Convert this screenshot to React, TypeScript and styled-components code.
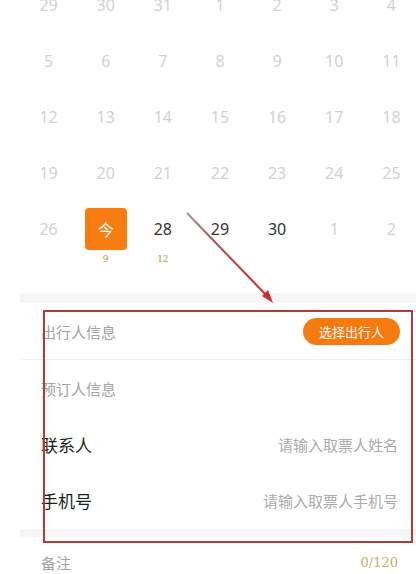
import React from "react";
import styled, { createGlobalStyle } from "styled-components";

const GlobalStyle = createGlobalStyle`
  html, body {
    margin: 0;
    padding: 0;
    background: #ffffff;
    overflow: hidden;
  }
  body {
    font-family: "Noto Sans", "Noto Sans CJK SC", sans-serif;
  }
`;

const Screen = styled.div`
  position: relative;
  width: 416px;
  height: 574px;
  overflow: hidden;
  background: #fff;
`;

const Page = styled.div`
  width: 400px;
  margin-left: 20px;
`;

const Calendar = styled.div`
  display: grid;
  grid-template-columns: repeat(7, 1fr);
  grid-auto-rows: 56px;
  margin-top: -23px;
  padding-bottom: 36px;
`;

const Cell = styled.div`
  position: relative;
  display: flex;
  align-items: center;
  justify-content: center;
`;

const Day = styled.div<{ $state: "off" | "on" | "today" }>`
  width: 42px;
  height: 42px;
  border-radius: 4px;
  display: flex;
  align-items: center;
  justify-content: center;
  font-size: 16px;
  color: ${(p) => (p.$state === "off" ? "#d2d2d2" : p.$state === "on" ? "#333" : "#fff")};
  background: ${(p) => (p.$state === "today" ? "#f77d10" : "transparent")};
`;

const Sub = styled.span`
  position: absolute;
  top: 53px;
  left: 0;
  right: 0;
  text-align: center;
  font-family: "DejaVu Serif", serif;
  font-size: 9px;
  color: #b59c32;
`;

const Band = styled.div<{ $h: number }>`
  height: ${(p) => p.$h}px;
  background: #f6f6f6;
`;

const Row = styled.div<{ $h: number; $line?: boolean }>`
  height: ${(p) => p.$h}px;
  display: flex;
  align-items: center;
  justify-content: space-between;
  padding: 0 20px 0 21px;
  border-bottom: ${(p) => (p.$line ? "1px solid #f0f0f0" : "none")};
`;

const Title = styled.span`
  font-size: 15px;
  color: #a3a3a3;
  font-family: "Noto Sans CJK SC", sans-serif;
`;

const Label = styled.span`
  font-size: 17px;
  color: #1e1e1e;
  font-family: "Noto Sans CJK SC", sans-serif;
`;

const Placeholder = styled.span`
  font-size: 15px;
  color: #ababab;
  font-family: "Noto Sans CJK SC", sans-serif;
  margin-right: 2px;
`;

const PickButton = styled.button`
  width: 97px;
  height: 27px;
  border: none;
  border-radius: 14px;
  background: #f57b0f;
  color: #fff;
  font-size: 13px;
  font-family: "Noto Sans CJK SC", sans-serif;
  padding: 0;
`;

const Counter = styled.span`
  font-family: "DejaVu Serif", serif;
  font-size: 13px;
  color: #c4b25a;
  margin-right: 2px;
`;

const Highlight = styled.div`
  position: absolute;
  left: 43px;
  top: 310px;
  width: 366px;
  height: 229px;
  border: 2px solid #b33b3b;
  pointer-events: none;
`;

const Arrow = styled.svg`
  position: absolute;
  left: 0;
  top: 0;
  pointer-events: none;
`;

type D = [string, "off" | "on" | "today", string?];

const days: D[] = [
  ["29", "off"], ["30", "off"], ["31", "off"], ["1", "off"], ["2", "off"], ["3", "off"], ["4", "off"],
  ["5", "off"], ["6", "off"], ["7", "off"], ["8", "off"], ["9", "off"], ["10", "off"], ["11", "off"],
  ["12", "off"], ["13", "off"], ["14", "off"], ["15", "off"], ["16", "off"], ["17", "off"], ["18", "off"],
  ["19", "off"], ["20", "off"], ["21", "off"], ["22", "off"], ["23", "off"], ["24", "off"], ["25", "off"],
  ["26", "off"], ["今", "today", "9"], ["28", "on", "12"], ["29", "on"], ["30", "on"], ["1", "off"], ["2", "off"],
];

export default function App() {
  return (
    <Screen>
      <GlobalStyle />
      <Page>
        <Calendar>
          {days.map(([n, s, sub], i) => (
            <Cell key={i}>
              <Day $state={s}>{n}</Day>
              {sub && <Sub>{sub}</Sub>}
            </Cell>
          ))}
        </Calendar>
        <Band $h={10} />
        <Row $h={56} $line>
          <Title>出行人信息</Title>
          <PickButton>选择出行人</PickButton>
        </Row>
        <Row $h={56}>
          <Title>预订人信息</Title>
        </Row>
        <Row $h={56}>
          <Label>联系人</Label>
          <Placeholder>请输入取票人姓名</Placeholder>
        </Row>
        <Row $h={57}>
          <Label>手机号</Label>
          <Placeholder>请输入取票人手机号</Placeholder>
        </Row>
        <Band $h={8} />
        <Row $h={50}>
          <Title>备注</Title>
          <Counter>0/120</Counter>
        </Row>
      </Page>
      <Highlight />
      <Arrow width="416" height="574" viewBox="0 0 416 574">
        <defs>
          <linearGradient id="ar" x1="187" y1="213" x2="272" y2="302" gradientUnits="userSpaceOnUse">
            <stop offset="0" stopColor="#9a9a9a" />
            <stop offset="0.35" stopColor="#b04a4a" />
            <stop offset="1" stopColor="#d12a2a" />
          </linearGradient>
        </defs>
        <line x1="187" y1="213" x2="268" y2="297" stroke="url(#ar)" strokeWidth="2" />
        <polygon points="273,303 262,296 268,290" fill="#d12a2a" />
      </Arrow>
    </Screen>
  );
}
